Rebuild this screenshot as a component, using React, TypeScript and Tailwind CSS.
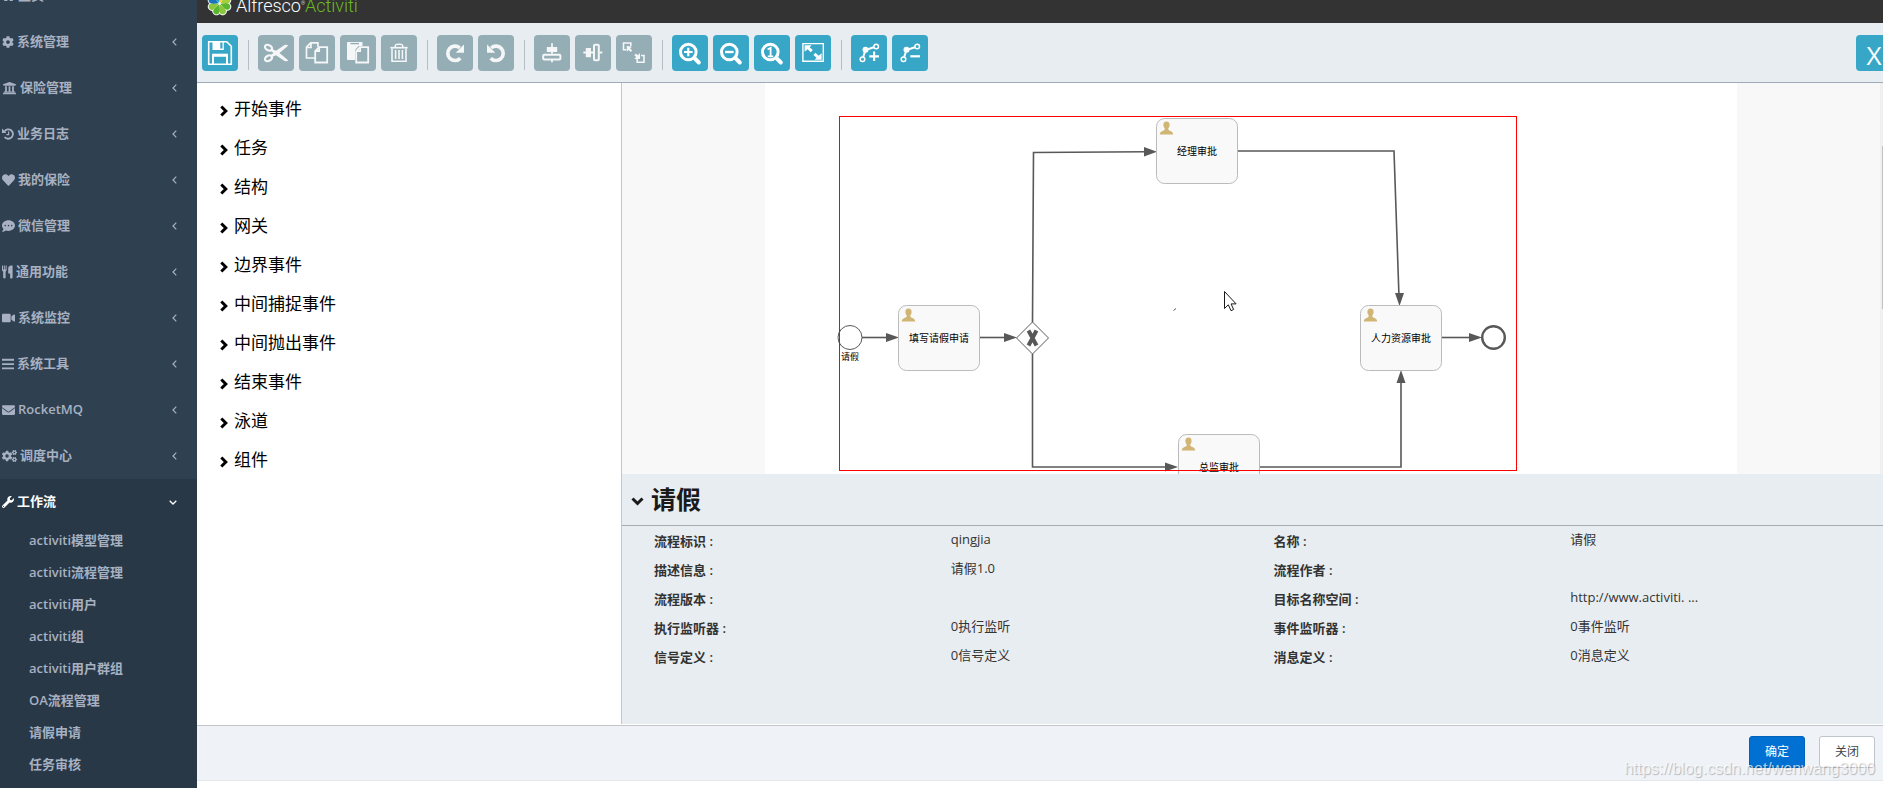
import React from "react";
import clsx from "clsx";
import {
  FaCog,
  FaCogs,
  FaCommentDots,
  FaEnvelope,
  FaHeart,
  FaHome,
  FaUniversity,
  FaVideo,
  FaWrench,
} from "react-icons/fa";

const INK = "#585858";

function HistoryIcon({ className }: { className?: string }) {
  return (
    <svg viewBox="0 0 12 12" className={className} fill="none">
      <path d="M2.4 3.4A4.7 4.7 0 1 1 2.6 9" stroke="currentColor" strokeWidth="1.8" />
      <path d="M0 .6V5h4.4z" fill="currentColor" />
      <path d="M6.6 3.4v3.2H4.4" stroke="currentColor" strokeWidth="1.2" />
    </svg>
  );
}

function CutleryIcon({ className }: { className?: string }) {
  return (
    <svg viewBox="0 0 11 13" className={className} fill="currentColor">
      <path d="M0 0h1v4h.8V0h1v4h.8V0h1v4.6c0 .7-.4 1.2-1 1.4V12c0 1.2-2.4 1.2-2.4 0V6C.4 5.8 0 5.3 0 4.6z" />
      <path d="M10.6 0v12c0 1.3-2.5 1.3-2.5 0V8H6.2V2.8C6.2 1.2 7.6 0 9.2 0z" />
    </svg>
  );
}

function BarsIcon({ className }: { className?: string }) {
  return (
    <svg viewBox="0 0 11 11" className={className} fill="currentColor">
      <path d="M0 .8h11v1.7H0zM0 4.7h11v1.7H0zM0 8.600h11v1.700H0z" />
    </svg>
  );
}

const MENU = [
  { label: "主页", icon: FaHome, size: "w-[13px]" },
  { label: "系统管理", icon: FaCog, size: "w-[12px]", arrow: true },
  { label: "保险管理", icon: FaUniversity, size: "w-[15px]", arrow: true },
  { label: "业务日志", icon: HistoryIcon, size: "w-[12px]", arrow: true },
  { label: "我的保险", icon: FaHeart, size: "w-[13px]", arrow: true },
  { label: "微信管理", icon: FaCommentDots, size: "w-[13px]", arrow: true },
  { label: "通用功能", icon: CutleryIcon, size: "w-[11px]", arrow: true },
  { label: "系统监控", icon: FaVideo, size: "w-[13px]", arrow: true },
  { label: "系统工具", icon: BarsIcon, size: "w-[12px]", arrow: true },
  { label: "RocketMQ", icon: FaEnvelope, size: "w-[13px]", arrow: true },
  { label: "调度中心", icon: FaCogs, size: "w-[15px]", arrow: true },
];

const SUBMENU = [
  "activiti模型管理",
  "activiti流程管理",
  "activiti用户",
  "activiti组",
  "activiti用户群组",
  "OA流程管理",
  "请假申请",
  "任务审核",
];

const PALETTE = [
  "开始事件",
  "任务",
  "结构",
  "网关",
  "边界事件",
  "中间捕捉事件",
  "中间抛出事件",
  "结束事件",
  "泳道",
  "组件",
];

const PROPERTIES = [
  ["流程标识", "qingjia"],
  ["名称", "请假"],
  ["描述信息", "请假1.0"],
  ["流程作者", ""],
  ["流程版本", ""],
  ["目标名称空间", "http://www.activiti. ..."],
  ["执行监听器", "0执行监听"],
  ["事件监听器", "0事件监听"],
  ["信号定义", "0信号定义"],
  ["消息定义", "0消息定义"],
];

function Sidebar() {
  return (
    <nav className="w-[197px] shrink-0 overflow-hidden bg-[#2f4050] text-[13px] font-semibold text-[#a7b1c2]">
      <ul className="-mt-[27px]">
        {MENU.map(({ label, icon: Icon, size, arrow }) => (
          <li key={label}>
            <a href="#" className="flex h-[46px] items-center gap-[3px] pr-5 pl-0.5">
              <Icon className={clsx("h-[14px] shrink-0", size)} />
              <span>{label}</span>
              {arrow && (
                <svg viewBox="0 0 5 8" className="ml-auto h-2 w-[5px]" fill="none" stroke="currentColor">
                  <path d="M4.3.7 1 4l3.3 3.3" strokeWidth="1.2" />
                </svg>
              )}
            </a>
          </li>
        ))}
        <li className="bg-[#293846]">
          <a href="#" className="flex h-[46px] items-center gap-[3px] pr-5 pl-0.5 text-white">
            <FaWrench className="h-[14px] w-[12px] shrink-0" />
            <span>工作流</span>
            <svg viewBox="0 0 8 5" className="ml-auto h-[5px] w-2" fill="none" stroke="currentColor">
              <path d="M.7.7 4 4 7.3.7" strokeWidth="1.3" />
            </svg>
          </a>
          <ul className="pb-2">
            {SUBMENU.map((label) => (
              <li key={label}>
                <a href="#" className="flex h-8 items-center pl-[29px]">
                  {label}
                </a>
              </li>
            ))}
          </ul>
        </li>
      </ul>
    </nav>
  );
}

function Logo() {
  const petals = ["#f7d23e", "#a6ce39", "#5cb531", "#8cc63f", "#5cb531", "#8cc63f", "#1b75bc", "#2a9ad6"];
  return (
    <div className="flex items-end gap-1 pl-[10px]">
      <svg viewBox="-12.5 -12.5 25 25" className="mb-[7px] size-[25px] shrink-0">
        {petals.map((fill, i) => (
          <circle key={fill + i} cy="-8.2" r="4.2" fill="#fff" transform={`rotate(${i * 45 + 22})`} />
        ))}
        <circle r="9" fill="#fff" />
        {petals.map((fill, i) => (
          <path
            key={fill + i}
            d="M0-.8C-1.200-3-3.200-6-3.200-8.300-3.200-12.500 3.200-12.500 3.200-8.300 3.200-6 1.200-3 0-.8z"
            fill={fill}
            transform={`rotate(${i * 45 + 22})`}
          />
        ))}
      </svg>
      <div className="mb-[7px] flex items-start font-[Roboto] text-lg leading-5 font-light whitespace-nowrap text-white">
        Alfresco<span className="text-[5px] leading-[14px]">®</span>
        <span className="text-[#6cb81f]">Activiti</span>
      </div>
    </div>
  );
}

function Magnifier({ children }: { children: React.ReactNode }) {
  return (
    <>
      <circle cx="16.3" cy="17" r="7.8" strokeWidth="3" />
      <path d="m22.5 23.2 4.3 4.3" strokeWidth="4" strokeLinecap="round" />
      {children}
    </>
  );
}

function BendPoint() {
  return (
    <>
      <circle cx="11.5" cy="24.3" r="2.3" strokeWidth="1.5" />
      <circle cx="25.2" cy="11.5" r="2.3" strokeWidth="1.5" />
      <path d="m12.2 22 2.3-7 8.3-2.8" strokeWidth="2" />
      <circle cx="14.5" cy="14.7" r="3" fill="#fff" stroke="none" />
    </>
  );
}

const FRONT_PAGE = "M20 12.2h8.2v15.3H16.2V16zM20.2 12.4V16h-3.8";

// every glyph is drawn on the 36px button face
const GROUPS: { name: string; disabled?: boolean; glyph: React.ReactNode }[][] = [
  [
    {
      name: "保存",
      glyph: (
        <>
          <path d="M6.7 6.7h18l4.6 4.6v17.9H6.7z" strokeWidth="1.6" />
          <path d="M10.5 6.5h11.3V15H10.5z" fill="#fff" stroke="none" />
          <path d="M18.3 7.5h2.2v6h-2.2z" fill="#38a7c7" stroke="none" />
          <path d="M11 29v-8.8h14V29" strokeWidth="2" />
          <path d="M10.2 18.7h15.6v3H10.2z" fill="#fff" stroke="none" />
        </>
      ),
    },
  ],
  [
    {
      name: "剪切",
      disabled: true,
      glyph: (
        <>
          <ellipse cx="10.5" cy="12.7" rx="3.8" ry="2.6" transform="rotate(28 10.5 12.7)" strokeWidth="2.2" />
          <ellipse cx="10.5" cy="23.3" rx="3.8" ry="2.6" transform="rotate(-28 10.5 23.3)" strokeWidth="2.2" />
          <path
            d="m13 13.5 5 2.2 8.5-5.6c1.500-.8 3-.5 3.600.7L21.500 18l8.600 7.200c-.6 1.200-2.100 1.500-3.600.7L18 20.300l-5 2.200-.9-1.900 3.400-2.600-3.400-2.600z"
            fill="#fff"
            stroke="none"
          />
        </>
      ),
    },
    {
      name: "复制",
      disabled: true,
      glyph: (
        <>
          <path d="M16 23H7.5V12.2l4.2-4.4h7.2v4M12 8v4.5H7.7" strokeWidth="1.700" />
          <path d={FRONT_PAGE} strokeWidth="1.8" />
        </>
      ),
    },
    {
      name: "粘贴",
      disabled: true,
      glyph: (
        <>
          <path d="M8 7h13.5c.6 0 1 .4 1 1v3h-4L15 15v10H8c-.6 0-1-.4-1-1V8c0-.6.4-1 1-1z" fill="#fff" stroke="none" />
          <path d="M10.5 8.6h8.5" stroke="#95adb5" strokeWidth="1.4" />
          <path d={FRONT_PAGE} strokeWidth="1.8" />
        </>
      ),
    },
    {
      name: "删除",
      disabled: true,
      glyph: (
        <>
          <path d="M9.3 12.7h17.4" strokeWidth="1.7" />
          <path d="M14.2 12c0-3 1.3-2.7 3.8-2.7s3.8-.3 3.8 2.7" strokeWidth="1.5" />
          <path d="M11 13.5v12.7h14V13.5" strokeWidth="1.6" />
          <path d="M14.6 15v9M18 15v9M21.4 15v9" strokeWidth="1.6" />
        </>
      ),
    },
  ],
  [
    {
      name: "重做",
      disabled: true,
      glyph: (
        <>
          <path d="M22.8 13A7.2 7.2 0 1 0 23.3 23.2" strokeWidth="3.6" />
          <path d="M27 9.5v8.3h-8.3z" fill="#fff" stroke="none" />
        </>
      ),
    },
    {
      name: "撤销",
      disabled: true,
      glyph: (
        <>
          <path d="M13.2 13A7.2 7.2 0 1 1 12.7 23.2" strokeWidth="3.6" />
          <path d="M9 9.5v8.3h8.3z" fill="#fff" stroke="none" />
        </>
      ),
    },
  ],
  [
    {
      name: "垂直对齐",
      disabled: true,
      glyph: (
        <>
          <path d="M18 8.3v10.5M18 25v2.3" strokeWidth="1.8" />
          <path d="M12.8 12h10.4v5H12.8z" fill="#fff" stroke="none" />
          <rect x="9.2" y="19.8" width="17.2" height="4.6" rx="1" strokeWidth="2" />
        </>
      ),
    },
    {
      name: "水平对齐",
      disabled: true,
      glyph: (
        <>
          <path d="M8.3 17.5h10M24.5 17.5h2.8" strokeWidth="1.8" />
          <path d="M10.8 13H16v9.2h-5.2z" fill="#fff" stroke="none" />
          <rect x="19" y="9.8" width="4.8" height="15.5" rx="1" strokeWidth="2" />
        </>
      ),
    },
    {
      name: "相同大小",
      disabled: true,
      glyph: (
        <>
          <path d="M10.5 14.7h-3V8h7.3v3" strokeWidth="1.6" />
          <path d="M10.8 10.8v6l1.9-1.7 2 2 1.5-1.5-2-2 1.7-1.8z" fill="#fff" stroke="none" />
          <path d="M22 22.5h-.8v4.8H28v-6.8h-3" strokeWidth="1.6" />
          <path d="M24 18v6h-5.8l1.9-1.9-1.8-1.8 1.8-1.8 1.8 1.8z" fill="#fff" stroke="none" />
        </>
      ),
    },
  ],
  [
    {
      name: "放大",
      glyph: (
        <Magnifier>
          <path d="M12 17h8.6M16.3 12.7v8.6" strokeWidth="2.2" />
        </Magnifier>
      ),
    },
    {
      name: "缩小",
      glyph: (
        <Magnifier>
          <path d="M12 17h8.6" strokeWidth="2.4" />
        </Magnifier>
      ),
    },
    {
      name: "实际大小",
      glyph: (
        <Magnifier>
          <path d="m13.6 14.5 3-1.7v8.4M13.8 21.3h5.4" strokeWidth="1.8" />
        </Magnifier>
      ),
    },
    {
      name: "适应屏幕",
      glyph: (
        <>
          <path d="M7.9 8.6h20.4v17.6H7.9z" strokeWidth="1.4" />
          <path
            d="M9.6 10.2h7l-2 2 3.2 2.800-2 2.200-3.200-3-3 2.600zM26.600 24.800h-7l2-2-3.200-2.800 2-2.200 3.200 3 3-2.600z"
            fill="#fff"
            stroke="none"
          />
        </>
      ),
    },
  ],
  [
    {
      name: "添加拐点",
      glyph: (
        <>
          <BendPoint />
          <path d="M18.3 21.3H28M23.1 16.5v9.6" strokeWidth="2.2" />
        </>
      ),
    },
    {
      name: "移除拐点",
      glyph: (
        <>
          <BendPoint />
          <path d="M18.3 21.3H28" strokeWidth="2.2" />
        </>
      ),
    },
  ],
];

function Toolbar() {
  return (
    <div className="flex h-[60px] shrink-0 items-start overflow-hidden border-b border-[#9fabb9] bg-[#e8edf1] pt-3 pl-[5px]">
      {GROUPS.map((group, i) => (
        <React.Fragment key={i}>
          {i > 0 && <div className="mt-[5px] mr-[9px] ml-[5px] h-[30px] w-px bg-[#b5bec6]" />}
          {group.map(({ name, disabled, glyph }) => (
            <button
              key={name}
              type="button"
              aria-label={name}
              disabled={disabled}
              className={clsx("mr-[5px] size-9 rounded", disabled ? "bg-[#95adb5]" : "bg-[#38a7c7]")}
            >
              <svg
                viewBox="0 0 36 36"
                className={clsx("size-9", disabled && "opacity-90")}
                fill="none"
                stroke="#fff"
              >
                {glyph}
              </svg>
            </button>
          ))}
        </React.Fragment>
      ))}
      <button
        type="button"
        className="-mr-[9px] ml-auto size-9 shrink-0 rounded bg-[#38a7c7] pt-1 text-[26px] leading-8 font-medium text-white"
      >
        X
      </button>
    </div>
  );
}

function Palette() {
  return (
    <div className="w-[424px] shrink-0 bg-white pt-1.5">
      {PALETTE.map((label) => (
        <button
          key={label}
          type="button"
          className="flex h-[39px] w-full items-center gap-[6px] pl-[23px] text-[17px] text-black"
        >
          <svg viewBox="0 0 8 12" className="mt-1 h-3 w-2" fill="none" stroke="currentColor">
            <path d="m1.3 1.5 4.5 4.5-4.5 4.5" strokeWidth="3" />
          </svg>
          {label}
        </button>
      ))}
    </div>
  );
}

function Task({ x, y, label }: { x: number; y: number; label: string }) {
  return (
    <g transform={`translate(${x} ${y})`}>
      <rect width="81" height="65" rx="8" fill="#f9f9f9" stroke="#bbb" />
      <path
        d="M10 3c2.200 0 3.300 1.600 3.100 3.800-.1 1.500-.7 2.300-1.200 3-.3 1 0 1.700.8 2.100 2 .8 3.800 1.200 4 4.100H3.300c.2-2.900 2-3.300 4-4.100.8-.4 1.100-1.100.8-2.100-.5-.7-1.100-1.500-1.200-3C6.700 4.600 7.800 3 10 3z"
        fill="#d1b575"
      />
      <text x="40.5" y="36.5" textAnchor="middle" fontSize="10" fill="#000">
        {label}
      </text>
    </g>
  );
}

const FLOWS = [
  "M97 254.5H125",
  "M215 254.5H243",
  "M267.5 239 268.5 69.5 382 68.8",
  "M473 68H629L634 214",
  "M267.5 271V384H404",
  "M495 384H636V297",
  "M677 254.5H708",
];

const HEADS = [
  "M134 254.5 121 250v9z",
  "M252 254.5 239 250v9z",
  "M392 68.7 379 64v9.5z",
  "M634.5 223 630 210h9z",
  "M413 384 400 379.5v9z",
  "M636 287 631.5 300h9z",
  "M717 254.5 704 250v9z",
];

function Diagram() {
  return (
    <svg viewBox="0 0 972 391" className="mx-auto h-[391px] w-[972px] shrink-0 bg-white">
      <g fill="none" stroke={INK} strokeWidth="1.6">
        {FLOWS.map((d) => (
          <path key={d} d={d} />
        ))}
      </g>
      {HEADS.map((d) => (
        <path key={d} d={d} fill={INK} />
      ))}
      <circle cx="85" cy="254.5" r="12" fill="#fff" stroke={INK} />
      <text x="85" y="277" textAnchor="middle" fontSize="9" fill="#000">
        请假
      </text>
      <Task x={133.5} y={222.5} label="填写请假申请" />
      <Task x={391.5} y={35.5} label="经理审批" />
      <Task x={413.5} y={351.5} label="总监审批" />
      <Task x={595.5} y={222.5} label="人力资源审批" />
      <path d="m267.5 239 16 16-16 16-16-16z" fill="#fff" stroke={INK} />
      <path d="m263.5 247.5 8 15M271.5 247.5l-8 15" stroke={INK} strokeWidth="4" />
      <circle cx="728.5" cy="254.5" r="11.3" fill="#fff" stroke={INK} strokeWidth="2.4" />
      <rect x="74.5" y="33.5" width="677" height="354" fill="none" stroke="#f00" />
      <path d="M408.5 227.5 411 225.5" stroke={INK} />
      <path d="M459.5 208.5v17l3.8-3.7 2.7 5.9 2.6-1.2-2.5-5.6h5z" fill="#fff" stroke="#1a1a1a" />
    </svg>
  );
}

function Properties() {
  return (
    <section className="flex-1 bg-[#e8edf1] text-[#333]">
      <h2 className="flex h-[52px] items-center gap-[7px] border-b border-[#a4acb4] pl-[9px] text-[25px] font-bold text-[#1a1a1a]">
        <svg viewBox="0 0 13 9" className="mt-1 h-[9px] w-[13px]" fill="none" stroke="currentColor">
          <path d="m1.5 1.5 5 5 5-5" strokeWidth="3" />
        </svg>
        请假
      </h2>
      <dl className="grid grid-cols-2 px-[11px] text-[13px]">
        {PROPERTIES.map(([name, value]) => (
          <div key={name} className="grid h-[29px] grid-cols-2 leading-[26px]">
            <dt className="pt-0.5 pl-[21px] font-semibold">{name} :</dt>
            <dd className="pl-2">{value}</dd>
          </div>
        ))}
      </dl>
    </section>
  );
}

export default function App() {
  return (
    <div className="flex h-screen overflow-hidden bg-white font-['Open_Sans','Noto_Sans_CJK_SC',sans-serif]">
      <Sidebar />
      <main className="flex min-w-0 flex-1 flex-col">
        <header className="flex h-[23px] shrink-0 items-end overflow-hidden bg-[#333]">
          <Logo />
        </header>
        <Toolbar />
        <div className="flex min-h-0 flex-1 border-b border-[#c4c6c8] pb-px">
          <Palette />
          <div className="flex min-w-0 flex-1 flex-col border-l border-[#c4c6c8]">
            <div className="flex shrink-0 bg-[#f8f8f8]">
              <Diagram />
              <div className="w-[3px] shrink-0 bg-[#f0f0f0] pt-[63px] pl-0.5">
                <div className="h-[163px] bg-[#c1c1c1]" />
              </div>
            </div>
            <Properties />
          </div>
        </div>
        <footer className="relative mb-[7px] flex h-[55px] shrink-0 items-start justify-end gap-[14px] border-b border-[#e2e7eb] bg-[#eff3f7] pt-[10px] pr-2 text-xs">
          <button type="button" className="h-8 w-14 rounded-[3px] border border-[#0062b8] bg-[#0070d2] text-white">
            确定
          </button>
          <button type="button" className="h-8 w-14 rounded-[3px] border border-[#bfc5cf] bg-white text-[#40464e]">
            关闭
          </button>
          <span className="absolute right-2 bottom-0 font-['Liberation_Sans',sans-serif] text-base leading-[22px] text-white/70 [text-shadow:1px_1px_1px_rgb(0_0_0/0.25)]">
            https://blog.csdn.net/wenwang3000
          </span>
        </footer>
      </main>
    </div>
  );
}
